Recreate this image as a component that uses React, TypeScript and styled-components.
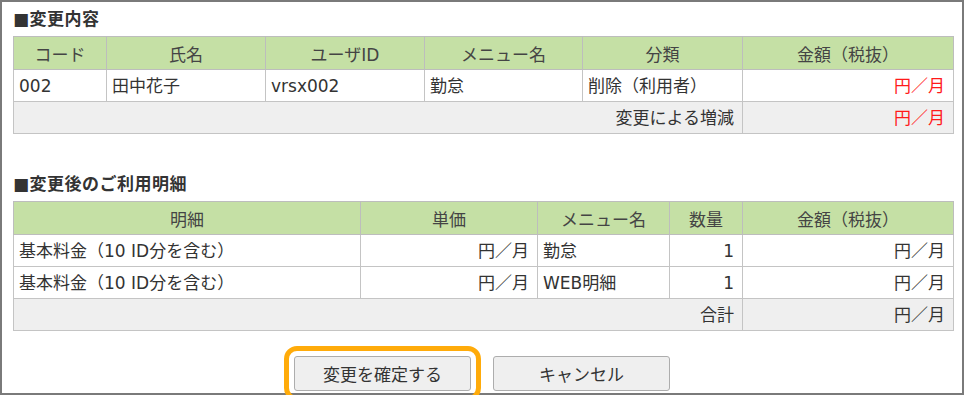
import styled, { createGlobalStyle } from 'styled-components';

const GlobalStyle = createGlobalStyle`
    html, body {
        margin: 0;
        padding: 0;
        background: #ffffff;
    }
    body {
        font-family: "DejaVu Sans", "Noto Sans CJK JP", sans-serif;
        color: #333333;
    }
`;

const Frame = styled.div`
    box-sizing: border-box;
    width: 964px;
    height: 395px;
    border: 2px solid #7a7a7a;
    padding: 5px 9px 0 11px;
    display: flex;
    flex-direction: column;
`;

const Heading = styled.h2<{ $gap?: number }>`
    margin: ${(p) => p.$gap ?? 0}px 0 0 0;
    height: 29px;
    font-size: 17px;
    font-weight: 700;
    line-height: 24px;
    color: #333333;
    letter-spacing: 0.5px;
`;

const Table = styled.table`
    width: 940px;
    table-layout: fixed;
    border-collapse: collapse;
    font-size: 17px;
`;

const Th = styled.th`
    height: 32px;
    padding: 0;
    background: #c5e0a5;
    border: 1px solid #bdbdbd;
    font-weight: 400;
    color: #444444;
    text-align: center;
`;

const Td = styled.td<{ $align?: 'left' | 'right'; $red?: boolean }>`
    height: 31px;
    padding: 0 8px 0 5px;
    border: 1px solid #c4c4c4;
    text-align: ${(p) => p.$align ?? 'left'};
    color: ${(p) => (p.$red ? '#ff1a1a' : '#333333')};
    white-space: nowrap;
    line-height: 20px;
`;

const Row = styled.tr<{ $total?: boolean }>`
    background: ${(p) => (p.$total ? '#efefef' : '#ffffff')};
`;

const ButtonBar = styled.div`
    display: flex;
    justify-content: center;
    gap: 22px;
    margin-top: 25px;
    padding-right: 2px;
`;

const Button = styled.button<{ $focused?: boolean }>`
    box-sizing: border-box;
    width: 177px;
    height: 35px;
    border: 1px solid #adadad;
    border-radius: 3px;
    background: #efefef;
    font-family: inherit;
    font-size: 17px;
    color: #333333;
    padding: 0;
    outline: ${(p) => (p.$focused ? '5px solid #ffab0a' : 'none')};
    outline-offset: 5px;
`;

const changes = [
    { code: '002', name: '田中花子', user: 'vrsx002', menu: '勤怠', kind: '削除（利用者）' },
];

const details = [
    { item: '基本料金（10 ID分を含む）', menu: '勤怠', qty: 1 },
    { item: '基本料金（10 ID分を含む）', menu: 'WEB明細', qty: 1 },
];

export default function App() {
    return (
        <Frame>
            <GlobalStyle />
            <Heading>■変更内容</Heading>
            <Table>
                <colgroup>
                    <col style={{ width: 93 }} />
                    <col style={{ width: 159 }} />
                    <col style={{ width: 159 }} />
                    <col style={{ width: 158 }} />
                    <col style={{ width: 160 }} />
                    <col style={{ width: 211 }} />
                </colgroup>
                <thead>
                    <tr>
                        <Th>コード</Th>
                        <Th>氏名</Th>
                        <Th>ユーザID</Th>
                        <Th>メニュー名</Th>
                        <Th>分類</Th>
                        <Th>金額（税抜）</Th>
                    </tr>
                </thead>
                <tbody>
                    {changes.map((c) => (
                        <Row key={c.code}>
                            <Td>{c.code}</Td>
                            <Td>{c.name}</Td>
                            <Td>{c.user}</Td>
                            <Td>{c.menu}</Td>
                            <Td>{c.kind}</Td>
                            <Td $align="right" $red>円／月</Td>
                        </Row>
                    ))}
                    <Row $total>
                        <Td colSpan={5} $align="right">変更による増減</Td>
                        <Td $align="right" $red>円／月</Td>
                    </Row>
                </tbody>
            </Table>

            <Heading $gap={38}>■変更後のご利用明細</Heading>
            <Table>
                <colgroup>
                    <col style={{ width: 347 }} />
                    <col style={{ width: 177 }} />
                    <col style={{ width: 132 }} />
                    <col style={{ width: 73 }} />
                    <col style={{ width: 211 }} />
                </colgroup>
                <thead>
                    <tr>
                        <Th>明細</Th>
                        <Th>単価</Th>
                        <Th>メニュー名</Th>
                        <Th>数量</Th>
                        <Th>金額（税抜）</Th>
                    </tr>
                </thead>
                <tbody>
                    {details.map((d) => (
                        <Row key={d.menu}>
                            <Td>{d.item}</Td>
                            <Td $align="right">円／月</Td>
                            <Td>{d.menu}</Td>
                            <Td $align="right">{d.qty}</Td>
                            <Td $align="right">円／月</Td>
                        </Row>
                    ))}
                    <Row $total>
                        <Td colSpan={4} $align="right">合計</Td>
                        <Td $align="right">円／月</Td>
                    </Row>
                </tbody>
            </Table>

            <ButtonBar>
                <Button $focused>変更を確定する</Button>
                <Button>キャンセル</Button>
            </ButtonBar>
        </Frame>
    );
}
